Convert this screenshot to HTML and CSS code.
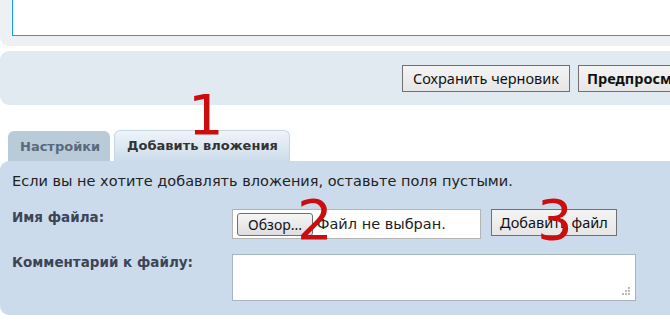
FILE: index.html
```html
<!DOCTYPE html>
<html lang="ru">
<head>
<meta charset="utf-8">
<link rel="stylesheet" href="styles.css">
</head>
<body>
<div class="page">
  <div class="editor">
    <div class="editor-box"></div>
  </div>
  <div class="actions">
    <button class="btn">Сохранить черновик</button>
    <button class="btn btn-bold">Предпросмотр</button>
  </div>
  <div class="tabs">
    <div class="tab">Настройки</div>
    <div class="tab tab-active">Добавить вложения</div>
  </div>
  <div class="panel">
    <p class="intro">Если вы не хотите добавлять вложения, оставьте поля пустыми.</p>
    <div class="row row-file">
      <div class="label">Имя файла:</div>
      <div class="controls">
        <div class="file-input"><span class="browse">Обзор...</span><span class="file-name">Файл не выбран.</span></div>
        <button class="btn btn-add">Добавить файл</button>
      </div>
    </div>
    <div class="row">
      <div class="label">Комментарий к файлу:</div>
      <div class="controls">
        <div class="comment">
          <svg class="grip" width="10" height="10" viewBox="0 0 10 10">
            <rect x="7" y="1" width="2" height="2" fill="#bbb"/>
            <rect x="4" y="4" width="2" height="2" fill="#bbb"/>
            <rect x="7" y="4" width="2" height="2" fill="#bbb"/>
            <rect x="1" y="7" width="2" height="2" fill="#bbb"/>
            <rect x="4" y="7" width="2" height="2" fill="#bbb"/>
            <rect x="7" y="7" width="2" height="2" fill="#bbb"/>
          </svg>
        </div>
      </div>
    </div>
  </div>
  <span class="mark mark-1">1</span>
  <span class="mark mark-2">2</span>
  <span class="mark mark-3">3</span>
</div>
</body>
</html>
```

FILE: styles.css
```css
* { box-sizing: border-box; }
html, body { margin: 0; padding: 0; background: #fff; }
body {
  width: 670px;
  height: 330px;
  overflow: hidden;
  font-family: "DejaVu Sans", Verdana, sans-serif;
  color: #222;
}
.page { position: relative; width: 670px; height: 330px; }

.editor {
  height: 46px;
  background: #edf1f4;
  border-bottom-left-radius: 9px;
  padding-left: 12px;
}
.editor-box {
  height: 36px;
  background: #fff;
  border-left: 1px solid #12a3f0;
  border-bottom: 1px solid #12a3f0;
}

.actions {
  margin-top: 5px;
  height: 54px;
  background: #e1eaf1;
  border-radius: 9px 0 0 9px;
  display: flex;
  align-items: center;
  gap: 8px;
  padding-left: 402px;
  white-space: nowrap;
  overflow: hidden;
}
.btn {
  font-family: "Noto Sans", "Open Sans", sans-serif;
  font-size: 14.5px;
  color: #111;
  height: 27px;
  padding: 0 8px;
  border: 1px solid #707070;
  background: linear-gradient(#f4f4f4, #e6e6e6);
  border-radius: 0;
  line-height: 25px;
  flex-shrink: 0;
  white-space: nowrap;
}
.actions .btn { width: 168px; }
.actions .btn-bold { font-weight: bold; width: 130px; text-align: left; }

.tabs {
  margin-top: 25px;
  display: flex;
  align-items: flex-end;
  gap: 4px;
  padding-left: 8px;
}
.tab {
  height: 30px;
  padding: 0 0 0 12px;
  background: #b9cad9;
  border-radius: 6px 6px 0 0;
  font-size: 13px;
  font-weight: bold;
  color: #596a7d;
  line-height: 31px;
  width: 102px;
  white-space: nowrap;
}
.tab-active {
  height: 31px;
  width: 176px;
  background: linear-gradient(#eef4fa, #cddcea);
  border: 1px solid #c5d6e6;
  border-bottom: none;
  color: #333;
  line-height: 30px;
}

.panel {
  height: 154px;
  background: #cbdbeb;
  border-radius: 9px 0 0 9px;
  padding: 11px 0 0 12px;
}
.intro {
  margin: 0;
  font-size: 14.5px;
  line-height: 18px;
  color: #222;
  white-space: nowrap;
}
.row {
  display: grid;
  grid-template-columns: 220px 1fr;
}
.row-file { margin-top: 19px; height: 45px; }
.label {
  font-size: 13.5px;
  font-weight: bold;
  color: #3c4556;
  line-height: 16px;
  white-space: nowrap;
}
.controls { display: flex; align-items: flex-start; gap: 10px; }
.file-input {
  width: 249px;
  height: 30px;
  background: #fff;
  border: 1px solid #b4b4b4;
  display: flex;
  align-items: center;
  padding-left: 4px;
  gap: 4px;
}
.browse {
  font-family: "Noto Sans", "Open Sans", sans-serif;
  font-size: 14px;
  height: 23px;
  width: 76px;
  margin-top: 3px;
  align-self: flex-start;
  line-height: 21px;
  text-align: center;
  border: 1px solid #707070;
  border-radius: 3px;
  background: linear-gradient(#f6f6f6, #dedede);
  color: #111;
}
.file-name {
  font-size: 14.5px;
  color: #222;
  white-space: nowrap;
}
.btn-add { width: 126px; padding: 0; text-align: center; }
.comment {
  position: relative;
  width: 404px;
  height: 47px;
  background: #fff;
  border: 1px solid #a8b4c0;
}
.grip { position: absolute; right: 4px; bottom: 4px; }

.mark {
  position: absolute;
  font-family: "DejaVu Sans", sans-serif;
  font-size: 56px;
  line-height: 1;
  color: #cc0d0d;
}
.mark-1 { left: 188px; top: 87px; }
.mark-2 { left: 297px; top: 192px; }
.mark-3 { left: 537px; top: 192px; }
```
